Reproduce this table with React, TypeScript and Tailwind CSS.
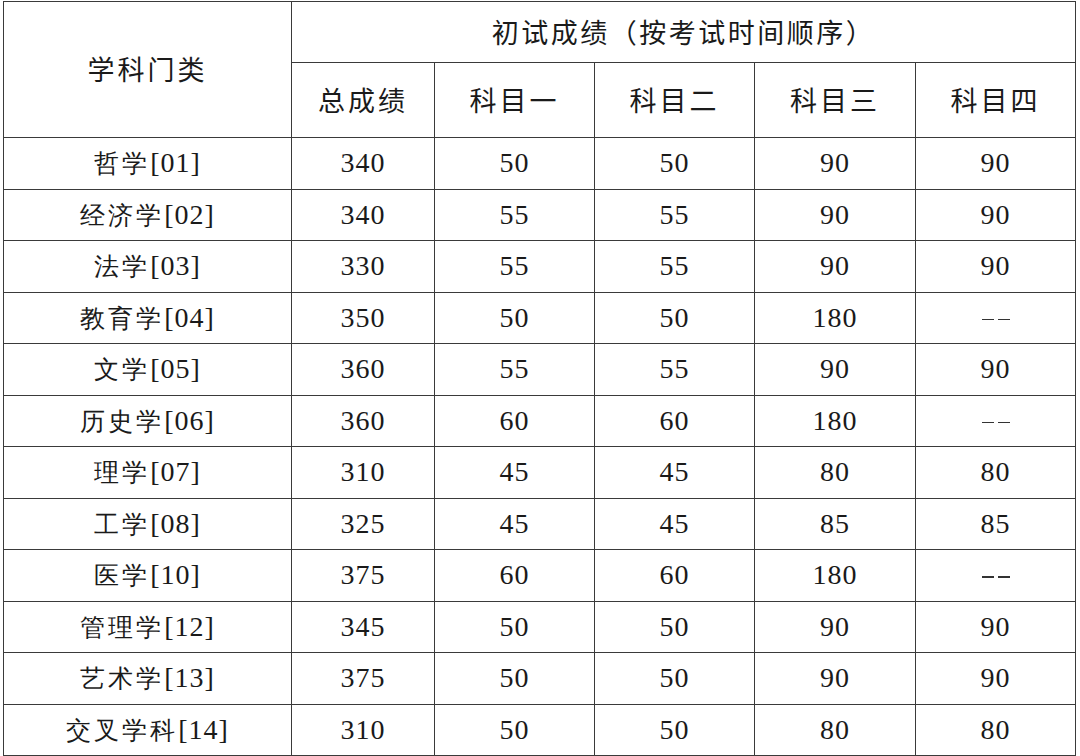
const rows = [
  { name: "哲学", code: "01", total: "340", s1: "50", s2: "50", s3: "90", s4: "90" },
  { name: "经济学", code: "02", total: "340", s1: "55", s2: "55", s3: "90", s4: "90" },
  { name: "法学", code: "03", total: "330", s1: "55", s2: "55", s3: "90", s4: "90" },
  { name: "教育学", code: "04", total: "350", s1: "50", s2: "50", s3: "180", s4: "--" },
  { name: "文学", code: "05", total: "360", s1: "55", s2: "55", s3: "90", s4: "90" },
  { name: "历史学", code: "06", total: "360", s1: "60", s2: "60", s3: "180", s4: "--" },
  { name: "理学", code: "07", total: "310", s1: "45", s2: "45", s3: "80", s4: "80" },
  { name: "工学", code: "08", total: "325", s1: "45", s2: "45", s3: "85", s4: "85" },
  { name: "医学", code: "10", total: "375", s1: "60", s2: "60", s3: "180", s4: "--" },
  { name: "管理学", code: "12", total: "345", s1: "50", s2: "50", s3: "90", s4: "90" },
  { name: "艺术学", code: "13", total: "375", s1: "50", s2: "50", s3: "90", s4: "90" },
  { name: "交叉学科", code: "14", total: "310", s1: "50", s2: "50", s3: "80", s4: "80" },
];

// header text is kaiti-like in the source, body is songti; closest we have
const head = "font-['Noto_Sans_CJK_SC',sans-serif] text-[27px] font-normal";
const body = "font-sans text-[25px] font-light tracking-[3px]";
const num = "font-['Liberation_Serif',serif] text-[28px] tracking-[1px]";
const cell = "border-[1.5px] border-[#3a3a3a] text-center align-middle p-0";

function Score({ value }: { value: string }) {
  if (value === "--") {
    return (
      <span className="inline-flex gap-[4px] align-middle">
        <span className="inline-block h-[1.5px] w-[12px] bg-[#333]" />
        <span className="inline-block h-[1.5px] w-[12px] bg-[#333]" />
      </span>
    );
  }
  return <span className={num}>{value}</span>;
}

export default function App() {
  return (
    <main className="h-[756px] w-[1080px] overflow-hidden bg-white pl-[3px] pt-[1px]">
      <table className="w-[1072px] table-fixed border-collapse text-[#1a1a1a]">
        <colgroup>
          <col className="w-[288px]" />
          <col className="w-[143px]" />
          <col className="w-[160px]" />
          <col className="w-[160px]" />
          <col className="w-[161px]" />
          <col className="w-[160px]" />
        </colgroup>
        <thead>
          <tr className="h-[61px]">
            <th rowSpan={2} className={`${cell} ${head} tracking-[3px]`}>
              学科门类
            </th>
            <th colSpan={5} className={`${cell} ${head} tracking-[2.5px]`}>
              初试成绩（按考试时间顺序）
            </th>
          </tr>
          <tr className="h-[75px]">
            {["总成绩", "科目一", "科目二", "科目三", "科目四"].map((h) => (
              <th key={h} className={`${cell} ${head} tracking-[3px]`}>
                {h}
              </th>
            ))}
          </tr>
        </thead>
        <tbody>
          {rows.map((r) => (
            <tr key={r.code} className="h-[51.5px] text-[#1a1a1a]">
              <td className={cell}>
                <span className={body}>{r.name}</span>
                <span className={num}>[{r.code}]</span>
              </td>
              <td className={cell}>
                <Score value={r.total} />
              </td>
              <td className={cell}>
                <Score value={r.s1} />
              </td>
              <td className={cell}>
                <Score value={r.s2} />
              </td>
              <td className={cell}>
                <Score value={r.s3} />
              </td>
              <td className={cell}>
                <Score value={r.s4} />
              </td>
            </tr>
          ))}
        </tbody>
      </table>
    </main>
  );
}
